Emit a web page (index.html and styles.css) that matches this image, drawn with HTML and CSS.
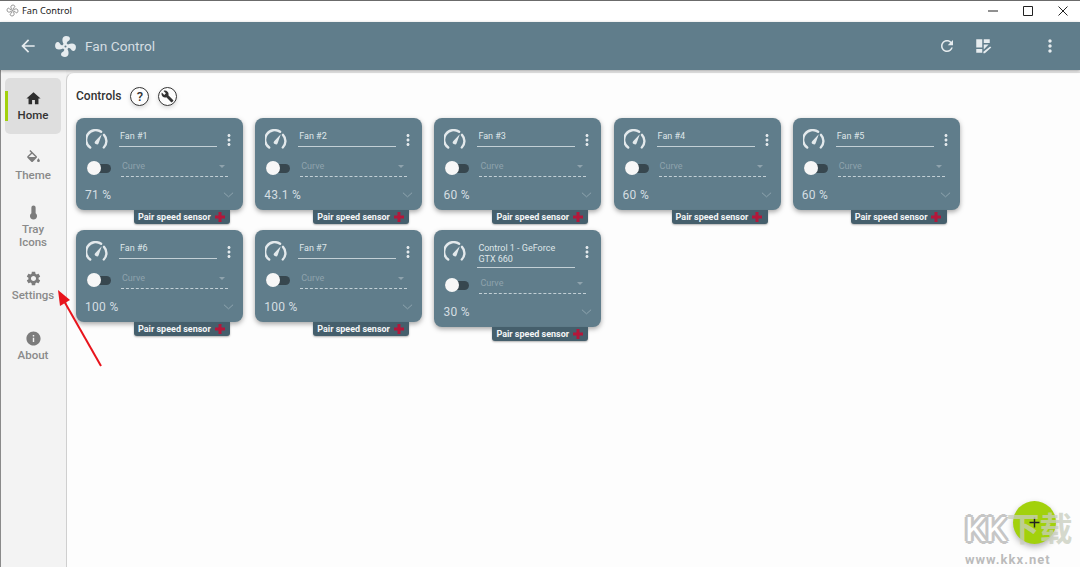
FILE: index.html
```html
<!DOCTYPE html>
<html lang="en">
<head>
    <meta charset="UTF-8">
    <meta name="viewport" content="width=device-width, initial-scale=1.0">
    <title>Fan Control</title>
    <link rel="stylesheet" href="styles.css">
</head>
<body>
    <svg class="icon-defs" width="0" height="0">
        <symbol id="i-fan" viewBox="0 0 24 24"><path d="M12,11A1,1 0 0,0 11,12A1,1 0 0,0 12,13A1,1 0 0,0 13,12A1,1 0 0,0 12,11M12.5,2C17,2 17.11,5.57 14.75,6.75C13.76,7.24 13.32,8.29 13.13,9.22C13.61,9.42 14.03,9.73 14.35,10.13C18.05,8.13 22.03,8.92 22.03,12.5C22.03,17 18.46,17.1 17.28,14.73C16.78,13.74 15.72,13.3 14.79,13.11C14.59,13.59 14.28,14 13.88,14.34C15.87,18.03 15.08,22 11.5,22C7,22 6.91,18.42 9.27,17.24C10.25,16.75 10.69,15.71 10.89,14.79C10.4,14.59 9.97,14.27 9.65,13.87C5.96,15.85 2,15.07 2,11.5C2,7 5.56,6.89 6.74,9.26C7.24,10.25 8.29,10.68 9.22,10.87C9.41,10.39 9.73,9.97 10.14,9.65C8.15,5.96 8.94,2 12.5,2Z"/></symbol>
        <symbol id="i-dots" viewBox="0 0 24 24"><path d="M12 8c1.1 0 2-.9 2-2s-.9-2-2-2-2 .9-2 2 .9 2 2 2zm0 2c-1.1 0-2 .9-2 2s.9 2 2 2 2-.9 2-2-.9-2-2-2zm0 6c-1.1 0-2 .9-2 2s.9 2 2 2 2-.9 2-2-.9-2-2-2z"/></symbol>
        <symbol id="i-gauge" viewBox="0 0 24 24">
            <path d="M4.6 20.2A10 10 0 0 1 16.5 3.1M19.6 6.4A10 10 0 0 1 19.4 20.2" fill="none" stroke="currentColor" stroke-width="2.6" stroke-linecap="round"/>
            <path d="M17.2 5.6L13.9 15.3A2.2 2.2 0 1 1 10.2 13.1Z"/>
        </symbol>
        <symbol id="i-plus" viewBox="0 0 24 24"><path d="M9 2h6v7h7v6h-7v7H9v-7H2V9h7z"/></symbol>
    </svg>

    <div class="titlebar">
        <svg class="titlebar-logo" viewBox="0 0 24 24"><use href="#i-fan"/></svg>
        <span class="titlebar-name">Fan Control</span>
        <div class="window-buttons">
            <svg viewBox="0 0 12 12"><path d="M1 6h10"/></svg>
            <svg viewBox="0 0 12 12"><path d="M1.5 1.5h9v9h-9z"/></svg>
            <svg viewBox="0 0 12 12"><path d="M1.5 1.5l9 9M10.5 1.5l-9 9"/></svg>
        </div>
    </div>

    <header class="appbar">
        <svg class="appbar-back" viewBox="0 0 24 24"><path d="M20 11H7.83l5.59-5.59L12 4l-8 8 8 8 1.41-1.41L7.83 13H20v-2z"/></svg>
        <svg class="appbar-fan" viewBox="0 0 24 24"><use href="#i-fan"/></svg>
        <span class="appbar-title">Fan Control</span>
        <div class="appbar-actions">
            <svg class="action-refresh" viewBox="0 0 24 24"><path d="M17.65 6.35C16.2 4.9 14.21 4 12 4c-4.42 0-7.99 3.58-7.99 8s3.57 8 7.99 8c3.73 0 6.84-2.55 7.73-6h-2.08c-.82 2.33-3.04 4-5.65 4-3.31 0-6-2.69-6-6s2.69-6 6-6c1.66 0 3.14.69 4.22 1.78L13 11h7V4l-2.35 2.35z"/></svg>
            <svg class="action-dash" viewBox="0 0 24 24"><path d="M3 3h8v11H3zM13 3h8v5h-8zM3 16h8v5H3zM13 10h6.5L13 16.500zM21.500 12.500l1.500 1.500-8.500 7.500H12.500v-2z"/></svg>
            <svg class="action-more" viewBox="0 0 24 24"><use href="#i-dots"/></svg>
        </div>
    </header>

    <div class="main">
        <nav class="sidebar">
            <a class="nav-item active">
                <svg viewBox="0 0 24 24"><path d="M10 20v-6h4v6h5v-8h3L12 3 2 12h3v8z"/></svg>
                <span>Home</span>
            </a>
            <a class="nav-item short">
                <svg viewBox="0 0 24 24"><path d="M19,11.5C19,11.5 17,13.67 17,15A2,2 0 0,0 19,17A2,2 0 0,0 21,15C21,13.67 19,11.5 19,11.5M5.21,10L10,5.21L14.79,10M16.56,8.94L7.62,0L6.21,1.41L8.59,3.79L3.44,8.94C2.85,9.5 2.85,10.47 3.44,11.06L8.94,16.56C9.23,16.85 9.62,17 10,17C10.38,17 10.77,16.85 11.06,16.56L16.56,11.06C17.15,10.47 17.15,9.5 16.56,8.94Z"/></svg>
                <span>Theme</span>
            </a>
            <a class="nav-item two-line">
                <svg viewBox="0 0 24 24"><path d="M15 13V5A3 3 0 0 0 9 5V13A5 5 0 1 0 15 13Z"/></svg>
                <span>Tray<br>Icons</span>
            </a>
            <a class="nav-item">
                <svg viewBox="0 0 24 24"><path d="M19.14 12.94c.04-.3.06-.61.06-.94 0-.32-.02-.64-.07-.94l2.03-1.58c.18-.14.23-.41.12-.61l-1.92-3.32c-.12-.22-.37-.29-.59-.22l-2.39.96c-.5-.38-1.03-.7-1.62-.94l-.36-2.54c-.04-.24-.24-.41-.48-.41h-3.84c-.24 0-.43.17-.47.41l-.36 2.54c-.59.24-1.13.57-1.62.94l-2.39-.96c-.22-.08-.47 0-.59.22L2.74 8.87c-.12.21-.08.47.12.61l2.03 1.58c-.05.3-.09.63-.09.94s.02.64.07.94l-2.03 1.58c-.18.14-.23.41-.12.61l1.92 3.32c.12.22.37.29.59.22l2.39-.96c.5.38 1.03.7 1.62.94l.36 2.54c.05.24.24.41.48.41h3.84c.24 0 .44-.17.47-.41l.36-2.54c.59-.24 1.13-.56 1.62-.94l2.39.96c.22.08.47 0 .59-.22l1.92-3.32c.12-.22.07-.47-.12-.61l-2.01-1.58zM12 15.600c-1.98 0-3.6-1.62-3.6-3.6s1.62-3.6 3.6-3.6 3.6 1.62 3.6 3.6-1.62 3.6-3.6 3.6z"/></svg>
                <span>Settings</span>
            </a>
            <a class="nav-item">
                <svg viewBox="0 0 24 24"><path d="M12 2C6.48 2 2 6.48 2 12s4.48 10 10 10 10-4.48 10-10S17.52 2 12 2zm1 15h-2v-6h2v6zm0-8h-2V7h2v2z"/></svg>
                <span>About</span>
            </a>
        </nav>

        <main class="panel">
            <div class="panel-head">
                <h2>Controls</h2>
                <span class="round-btn question">?</span>
                <span class="round-btn">
                    <svg viewBox="0 0 24 24"><path d="M22.7 19l-9.1-9.1c.9-2.3.4-5-1.500-6.900-2-2-5-2.400-7.400-1.300L9 6 6 9 1.600 4.700C.4 7.100.9 10.100 2.900 12.100c1.900 1.900 4.600 2.400 6.900 1.500l9.100 9.100c.4.4 1 .4 1.400 0l2.300-2.300c.5-.4.5-1.100.1-1.400z"/></svg>
                </span>
            </div>

            <div class="controls">
                <div class="control">
                    <div class="card">
                        <div class="card-top">
                            <svg class="gauge" viewBox="0 0 24 24"><use href="#i-gauge"/></svg>
                            <div class="card-name">Fan #1</div>
                            <svg class="card-more" viewBox="0 0 24 24"><use href="#i-dots"/></svg>
                        </div>
                        <div class="card-mid">
                            <div class="toggle"><span class="knob"></span></div>
                            <div class="curve">Curve<span class="caret"></span></div>
                        </div>
                        <div class="card-bottom">
                            <span class="value">71 %</span>
                            <svg class="chevron" viewBox="0 0 12 8"><path d="M1 1.500l5 4.500 5-4.500"/></svg>
                        </div>
                    </div>
                    <div class="pair">Pair speed sensor<svg viewBox="0 0 24 24"><use href="#i-plus"/></svg></div>
                </div>
                <div class="control">
                    <div class="card">
                        <div class="card-top">
                            <svg class="gauge" viewBox="0 0 24 24"><use href="#i-gauge"/></svg>
                            <div class="card-name">Fan #2</div>
                            <svg class="card-more" viewBox="0 0 24 24"><use href="#i-dots"/></svg>
                        </div>
                        <div class="card-mid">
                            <div class="toggle"><span class="knob"></span></div>
                            <div class="curve">Curve<span class="caret"></span></div>
                        </div>
                        <div class="card-bottom">
                            <span class="value">43.1 %</span>
                            <svg class="chevron" viewBox="0 0 12 8"><path d="M1 1.500l5 4.500 5-4.500"/></svg>
                        </div>
                    </div>
                    <div class="pair">Pair speed sensor<svg viewBox="0 0 24 24"><use href="#i-plus"/></svg></div>
                </div>
                <div class="control">
                    <div class="card">
                        <div class="card-top">
                            <svg class="gauge" viewBox="0 0 24 24"><use href="#i-gauge"/></svg>
                            <div class="card-name">Fan #3</div>
                            <svg class="card-more" viewBox="0 0 24 24"><use href="#i-dots"/></svg>
                        </div>
                        <div class="card-mid">
                            <div class="toggle"><span class="knob"></span></div>
                            <div class="curve">Curve<span class="caret"></span></div>
                        </div>
                        <div class="card-bottom">
                            <span class="value">60 %</span>
                            <svg class="chevron" viewBox="0 0 12 8"><path d="M1 1.500l5 4.500 5-4.500"/></svg>
                        </div>
                    </div>
                    <div class="pair">Pair speed sensor<svg viewBox="0 0 24 24"><use href="#i-plus"/></svg></div>
                </div>
                <div class="control">
                    <div class="card">
                        <div class="card-top">
                            <svg class="gauge" viewBox="0 0 24 24"><use href="#i-gauge"/></svg>
                            <div class="card-name">Fan #4</div>
                            <svg class="card-more" viewBox="0 0 24 24"><use href="#i-dots"/></svg>
                        </div>
                        <div class="card-mid">
                            <div class="toggle"><span class="knob"></span></div>
                            <div class="curve">Curve<span class="caret"></span></div>
                        </div>
                        <div class="card-bottom">
                            <span class="value">60 %</span>
                            <svg class="chevron" viewBox="0 0 12 8"><path d="M1 1.500l5 4.500 5-4.500"/></svg>
                        </div>
                    </div>
                    <div class="pair">Pair speed sensor<svg viewBox="0 0 24 24"><use href="#i-plus"/></svg></div>
                </div>
                <div class="control">
                    <div class="card">
                        <div class="card-top">
                            <svg class="gauge" viewBox="0 0 24 24"><use href="#i-gauge"/></svg>
                            <div class="card-name">Fan #5</div>
                            <svg class="card-more" viewBox="0 0 24 24"><use href="#i-dots"/></svg>
                        </div>
                        <div class="card-mid">
                            <div class="toggle"><span class="knob"></span></div>
                            <div class="curve">Curve<span class="caret"></span></div>
                        </div>
                        <div class="card-bottom">
                            <span class="value">60 %</span>
                            <svg class="chevron" viewBox="0 0 12 8"><path d="M1 1.500l5 4.500 5-4.500"/></svg>
                        </div>
                    </div>
                    <div class="pair">Pair speed sensor<svg viewBox="0 0 24 24"><use href="#i-plus"/></svg></div>
                </div>
                <div class="control">
                    <div class="card">
                        <div class="card-top">
                            <svg class="gauge" viewBox="0 0 24 24"><use href="#i-gauge"/></svg>
                            <div class="card-name">Fan #6</div>
                            <svg class="card-more" viewBox="0 0 24 24"><use href="#i-dots"/></svg>
                        </div>
                        <div class="card-mid">
                            <div class="toggle"><span class="knob"></span></div>
                            <div class="curve">Curve<span class="caret"></span></div>
                        </div>
                        <div class="card-bottom">
                            <span class="value">100 %</span>
                            <svg class="chevron" viewBox="0 0 12 8"><path d="M1 1.500l5 4.500 5-4.500"/></svg>
                        </div>
                    </div>
                    <div class="pair">Pair speed sensor<svg viewBox="0 0 24 24"><use href="#i-plus"/></svg></div>
                </div>
                <div class="control">
                    <div class="card">
                        <div class="card-top">
                            <svg class="gauge" viewBox="0 0 24 24"><use href="#i-gauge"/></svg>
                            <div class="card-name">Fan #7</div>
                            <svg class="card-more" viewBox="0 0 24 24"><use href="#i-dots"/></svg>
                        </div>
                        <div class="card-mid">
                            <div class="toggle"><span class="knob"></span></div>
                            <div class="curve">Curve<span class="caret"></span></div>
                        </div>
                        <div class="card-bottom">
                            <span class="value">100 %</span>
                            <svg class="chevron" viewBox="0 0 12 8"><path d="M1 1.500l5 4.500 5-4.500"/></svg>
                        </div>
                    </div>
                    <div class="pair">Pair speed sensor<svg viewBox="0 0 24 24"><use href="#i-plus"/></svg></div>
                </div>
                <div class="control">
                    <div class="card tall">
                        <div class="card-top">
                            <svg class="gauge" viewBox="0 0 24 24"><use href="#i-gauge"/></svg>
                            <div class="card-name">Control 1 - GeForce GTX 660</div>
                            <svg class="card-more" viewBox="0 0 24 24"><use href="#i-dots"/></svg>
                        </div>
                        <div class="card-mid">
                            <div class="toggle"><span class="knob"></span></div>
                            <div class="curve">Curve<span class="caret"></span></div>
                        </div>
                        <div class="card-bottom">
                            <span class="value">30 %</span>
                            <svg class="chevron" viewBox="0 0 12 8"><path d="M1 1.500l5 4.500 5-4.500"/></svg>
                        </div>
                    </div>
                    <div class="pair">Pair speed sensor<svg viewBox="0 0 24 24"><use href="#i-plus"/></svg></div>
                </div>
            </div>
        </main>
    </div>

    <!-- red annotation arrow over the sidebar -->
    <svg class="arrow" viewBox="0 0 60 90"><path d="M46 79L9 14" stroke="#e8141c" stroke-width="2" fill="none"/><path d="M3 3L15 13 5 19Z" fill="#e8141c"/></svg>

    <div class="fab"><svg viewBox="0 0 24 24"><path d="M19 13h-6v6h-2v-6H5v-2h6V5h2v6h6v2z"/></svg></div>

    <div class="watermark">
        <div class="wm-logo"><span class="wm-kk">KK</span><span class="wm-cn">下载</span></div>
        <div class="wm-url">www.kkx.net</div>
    </div>
</body>
</html>
```

FILE: styles.css
```css
* {
    box-sizing: border-box;
}
html, body {
    height: 100%;
}
body {
    margin: 0;
    font-family: Roboto, "Noto Sans CJK SC", sans-serif;
    background-color: #efefef;
    color: #333;
    overflow: hidden;
    border-top: 1px solid #6b6b6b;
    display: flex;
    flex-direction: column;
}
svg {
    display: block;
    fill: currentColor;
}
.icon-defs {
    position: absolute;
}
.titlebar {
    height: 21px;
    background-color: white;
    display: flex;
    align-items: center;
    padding: 0 0 2px 6px;
    font-family: "Noto Sans", sans-serif;
    font-size: 9.2px;
    color: #222;
}
.titlebar-logo {
    width: 13px;
    height: 13px;
    margin-right: 3px;
    fill: none;
    stroke: #777;
    stroke-width: 1.5;
}
.window-buttons {
    margin-left: auto;
    display: flex;
    gap: 23px;
    padding-right: 11px;
    color: #222;
}
.window-buttons svg {
    width: 12px;
    height: 12px;
    fill: none;
    stroke: #222;
    stroke-width: 1;
}
.appbar {
    height: 48px;
    background-color: #607d8b;
    color: #e6ecef;
    display: flex;
    align-items: center;
    box-shadow: 0 1px 3px rgba(0, 0, 0, 0.3);
    position: relative;
    z-index: 1;
}
.appbar-back {
    width: 20px;
    height: 20px;
    margin-left: 18px;
}
.appbar-fan {
    width: 25px;
    height: 25px;
    margin-left: 15px;
}
.appbar-title {
    margin-left: 7px;
    font-size: 13.7px;
    color: #d5dee2;
}
.appbar-actions {
    margin-left: auto;
    display: flex;
    align-items: center;
    padding-right: 20px;
}
.action-refresh {
    width: 18px;
    height: 18px;
}
.action-dash {
    width: 18px;
    height: 18px;
    margin-left: 18px;
}
.action-more {
    width: 20px;
    height: 20px;
    margin-left: 48px;
}
.main {
    flex: 1;
    display: flex;
    min-height: 0;
}
.sidebar {
    width: 66px;
    background-color: #f3f3f3;
    border-left: 1px solid #8a8a8a;
    padding: 8px 4px 0 4px;
    display: flex;
    flex-direction: column;
    gap: 4px;
}
.nav-item {
    width: 56px;
    height: 56px;
    border-radius: 5px;
    display: flex;
    flex-direction: column;
    align-items: center;
    padding-top: 12px;
    font-size: 11.5px;
    font-weight: 500;
    line-height: 13px;
    text-align: center;
    color: #8a8a8a;
}
.nav-item.short {
    height: 50px;
}
.nav-item.two-line {
    height: 62px;
}
.nav-item svg {
    width: 17px;
    height: 17px;
    margin-bottom: 2px;
    color: #7c7c7c;
}
.nav-item.active {
    background-color: #dedede;
    color: #333;
    position: relative;
}
.nav-item.active svg {
    color: #2e2e2e;
}
.nav-item.active::before {
    content: "";
    position: absolute;
    left: 0;
    top: 13px;
    width: 3px;
    height: 30px;
    background-color: #a2d10c;
}
.panel {
    flex: 1;
    background-color: #fdfdfd;
    border-left: 1px solid #cfcfcf;
    border-top: 1px solid #e4e4e4;
    border-top-left-radius: 8px;
    margin-top: 2px;
    padding: 12px 9px;
}
.panel-head {
    display: flex;
    align-items: center;
    height: 22px;
    margin-bottom: 11px;
}
.panel-head h2 {
    margin: 0 9px 0 0;
    font-size: 12px;
    font-weight: 500;
    color: #333;
}
.round-btn {
    width: 19px;
    height: 19px;
    border: 1.500px solid #333;
    border-radius: 50%;
    margin-right: 9px;
    display: flex;
    align-items: center;
    justify-content: center;
    color: #333;
    box-shadow: 0 2px 4px rgba(0, 0, 0, 0.15);
}
.round-btn svg {
    width: 13px;
    height: 13px;
}
.question {
    font-size: 13px;
    font-weight: 500;
}
.controls {
    display: flex;
    flex-wrap: wrap;
    align-items: flex-start;
    gap: 6px 12.200px;
}
.control {
    width: 167px;
}
.card {
    height: 92px;
    background-color: #607d8b;
    border-radius: 8px;
    box-shadow: 0 2px 5px rgba(0, 0, 0, 0.35);
    color: #e3e9ec;
    padding: 10px 7px 0 10px;
    display: flex;
    flex-direction: column;
}
.card.tall {
    height: 97px;
}
.card-top {
    display: flex;
    align-items: flex-start;
}
.gauge {
    width: 22px;
    height: 22px;
    flex-shrink: 0;
    margin-top: 1px;
}
.card-name {
    width: 98px;
    flex-shrink: 0;
    margin-left: 11px;
    padding: 3px 0 4px 1px;
    min-height: 19px;
    font-size: 9px;
    line-height: 11px;
    color: #dfe6e9;
    border-bottom: 1px solid #c3d0d6;
}
.tall .card-name {
    padding: 3px 16px 2px 1px;
}
.card-more {
    width: 18px;
    height: 18px;
    flex-shrink: 0;
    margin: 3px -2px 0 3px;
}
.card-mid {
    display: flex;
    align-items: center;
    margin-top: 7px;
}
.toggle {
    width: 24px;
    height: 9px;
    border-radius: 5px;
    background-color: #37474f;
    margin: 1px 0 0 1px;
    position: relative;
    flex-shrink: 0;
}
.knob {
    position: absolute;
    left: 0;
    top: -2.500px;
    width: 14px;
    height: 14px;
    border-radius: 50%;
    background-color: #f7f7f7;
}
.curve {
    width: 107px;
    margin-left: 10px;
    height: 19px;
    padding: 3px 0 0 1px;
    font-size: 9px;
    color: #8fa3ad;
    border-bottom: 1px dashed #c3d0d6;
    position: relative;
}
.caret {
    position: absolute;
    right: 3px;
    top: 7px;
    border: 3px solid transparent;
    border-top-color: #8fa3ad;
}
.card-bottom {
    display: flex;
    align-items: center;
    justify-content: space-between;
    margin-top: 11px;
    padding-right: 2px;
    margin-left: -1px;
}
.value {
    font-size: 12px;
    color: #d5dee2;
    letter-spacing: 0.3px;
}
.chevron {
    width: 11px;
    height: 8px;
    fill: none;
    stroke: #93a8b2;
    stroke-width: 1;
}
.pair {
    width: 96px;
    height: 14px;
    margin-left: 58px;
    background-color: #455f6c;
    border-radius: 0 0 3px 3px;
    color: #f4f6f7;
    font-size: 9px;
    font-weight: 700;
    padding-left: 4px;
    display: flex;
    align-items: center;
    box-shadow: 0 1px 2px rgba(0, 0, 0, 0.3);
}
.pair svg {
    width: 12px;
    height: 12px;
    flex-shrink: 0;
    margin-left: 3px;
    color: #b3173a;
}
.arrow {
    position: absolute;
    left: 55px;
    top: 287px;
    width: 60px;
    height: 90px;
}
.fab {
    position: absolute;
    left: 1013px;
    top: 501px;
    width: 43px;
    height: 43px;
    border-radius: 50%;
    background-color: #a2d10c;
    box-shadow: 0 3px 6px rgba(0, 0, 0, 0.3);
    display: flex;
    align-items: center;
    justify-content: center;
    color: #222;
}
.fab svg {
    width: 17px;
    height: 17px;
}
/* site watermark stamped over the bottom right corner */
.watermark {
    position: absolute;
    left: 965px;
    top: 512px;
    width: 115px;
}
.wm-logo {
    font-size: 33px;
    line-height: 36px;
    white-space: nowrap;
}
.wm-kk {
    color: white;
    font-weight: 400;
    text-shadow: 3px 0 0 #c6c6c6, -3px 0 0 #c6c6c6, 0 3px 0 #c6c6c6, 0 -3px 0 #c6c6c6, 2px 2px 0 #c6c6c6, -2px -2px 0 #c6c6c6, 2px -2px 0 #c6c6c6, -2px 2px 0 #c6c6c6;
}
.wm-cn {
    color: rgba(200, 205, 190, 0.75);
    font-weight: 700;
}
.wm-url {
    margin-top: 5px;
    font-size: 13px;
    font-weight: 700;
    letter-spacing: 1px;
    line-height: 14px;
    color: rgba(175, 175, 175, 0.85);
}
```
